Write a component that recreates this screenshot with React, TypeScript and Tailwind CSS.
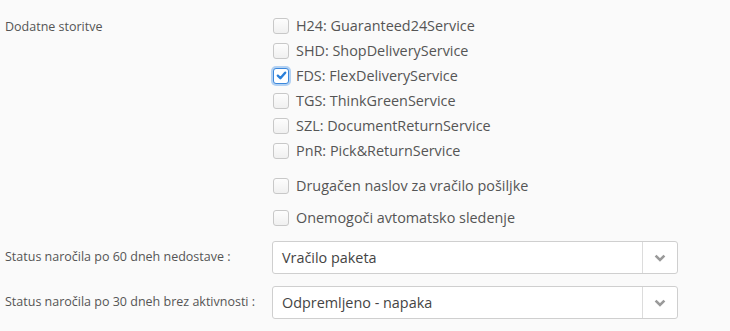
import { useState } from "react";

const services = [
  { code: "H24", label: "H24: Guaranteed24Service", checked: false },
  { code: "SHD", label: "SHD: ShopDeliveryService", checked: false },
  { code: "FDS", label: "FDS: FlexDeliveryService", checked: true },
  { code: "TGS", label: "TGS: ThinkGreenService", checked: false },
  { code: "SZL", label: "SZL: DocumentReturnService", checked: false },
  { code: "PnR", label: "PnR: Pick&ReturnService", checked: false },
];

function Box({ checked, onClick }: { checked: boolean; onClick: () => void }) {
  return (
    <button
      type="button"
      onClick={onClick}
      className={`w-4 h-4 shrink-0 rounded-[3px] border flex items-center justify-center ${
        checked
          ? "border-[#3b87db] bg-white shadow-[0_0_0_2px_rgba(90,160,235,0.45)]"
          : "border-[#c8c8c8] bg-gradient-to-b from-[#fdfdfd] to-[#f0f0f0]"
      }`}
    >
      {checked && (
        <svg width="11" height="11" viewBox="0 0 12 12">
          <path d="M2 6.2 L4.8 9 L10 3" fill="none" stroke="#2a7fd9" strokeWidth="2.6" strokeLinecap="round" strokeLinejoin="round" />
        </svg>
      )}
    </button>
  );
}

function CheckRow({ label, checked, onToggle }: { label: string; checked: boolean; onToggle: () => void }) {
  return (
    <label className="flex items-center gap-[7px] h-[25px] cursor-pointer">
      <Box checked={checked} onClick={onToggle} />
      <span className="text-[14.4px] text-[#555]">{label}</span>
    </label>
  );
}

function Select({ value }: { value: string }) {
  return (
    <div className="w-[406px] h-[33px] flex bg-white border border-[#cfcfcf] rounded-[3px]">
      <div className="flex-1 flex items-center pl-[9px] text-[14.4px] text-[#444]">{value}</div>
      <div className="w-[35px] border-l border-[#dcdcdc] flex items-center justify-center">
        <svg width="12" height="8" viewBox="0 0 12 8">
          <path d="M1.6 1.6 L6 6 L10.4 1.6" fill="none" stroke="#9a9a9a" strokeWidth="2.6" />
        </svg>
      </div>
    </div>
  );
}

export default function App() {
  const [checked, setChecked] = useState<Record<string, boolean>>(
    Object.fromEntries(services.map((s) => [s.code, s.checked]))
  );
  const [extra, setExtra] = useState({ address: false, tracking: false });

  return (
    <div className="w-[730px] h-[331px] bg-[#fafafa] font-['Open_Sans',sans-serif] text-[#555]">
      <div className="flex pt-[13px]">
        <div className="w-[268px] pl-[5px] pt-[5px] text-[12.5px]">Dodatne storitve</div>
        <div className="flex flex-col pl-[5px]">
          {services.map((s) => (
            <CheckRow
              key={s.code}
              label={s.label}
              checked={checked[s.code]}
              onToggle={() => setChecked({ ...checked, [s.code]: !checked[s.code] })}
            />
          ))}
          <div className="mt-[10px] flex flex-col gap-[7px]">
            <CheckRow
              label="Drugačen naslov za vračilo pošiljke"
              checked={extra.address}
              onToggle={() => setExtra({ ...extra, address: !extra.address })}
            />
            <CheckRow
              label="Onemogoči avtomatsko sledenje"
              checked={extra.tracking}
              onToggle={() => setExtra({ ...extra, tracking: !extra.tracking })}
            />
          </div>
        </div>
      </div>
      <div className="flex flex-col gap-[12px] mt-[11px]">
        <div className="flex items-center">
          <div className="w-[272px] pl-[5px] text-[12.5px]">Status naročila po 60 dneh nedostave :</div>
          <Select value="Vračilo paketa" />
        </div>
        <div className="flex items-center">
          <div className="w-[272px] pl-[5px] text-[12.5px]">Status naročila po 30 dneh brez aktivnosti :</div>
          <Select value="Odpremljeno - napaka" />
        </div>
      </div>
    </div>
  );
}
